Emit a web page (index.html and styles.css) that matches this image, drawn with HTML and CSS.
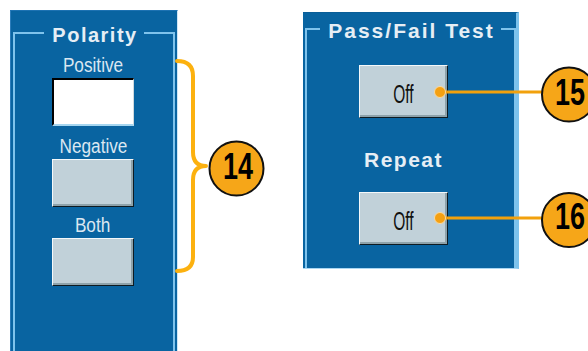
FILE: index.html
```html
<!DOCTYPE html>
<html lang="en">
<head>
    <meta charset="UTF-8">
    <meta name="viewport" content="width=device-width, initial-scale=1.0">
    <title>Polarity and Pass/Fail Test</title>
    <link rel="stylesheet" href="styles.css">
</head>
<body>
    <div class="panel panel-polarity">
        <div class="legend"><span>Polarity</span></div>
        <div class="frame">
            <div class="label"><span>Positive</span></div>
            <div class="btn btn-on"></div>
            <div class="label"><span>Negative</span></div>
            <div class="btn"></div>
            <div class="label label-both"><span>Both</span></div>
            <div class="btn"></div>
        </div>
    </div>

    <div class="panel panel-test">
        <div class="legend legend-test"><span>Pass/Fail Test</span></div>
        <div class="frame frame-test">
            <div class="btn btn-off"><span>Off</span></div>
            <div class="repeat">Repeat</div>
            <div class="btn btn-off btn-repeat"><span>Off</span></div>
        </div>
    </div>

    <!-- callouts drawn over the panels -->
    <svg class="callouts" width="588" height="351" viewBox="0 0 588 351">
        <path class="brace" d="M177,61 Q193,61 193,76 L193,152 Q193,166 206,166 Q193,166 193,180 L193,257 Q193,271 177,271"/>
        <line class="leader" x1="440" y1="92" x2="543" y2="92"/>
        <line class="leader" x1="440" y1="218" x2="543" y2="218"/>
        <circle class="dot" cx="440" cy="92" r="5.5"/>
        <circle class="dot" cx="440" cy="218" r="5.5"/>

        <circle class="badge" cx="236.5" cy="168.5" r="27"/>
        <text class="num" x="238" y="179" textLength="30" lengthAdjust="spacingAndGlyphs">14</text>

        <circle class="badge" cx="569" cy="94.5" r="27"/>
        <text class="num" x="570" y="105" textLength="30" lengthAdjust="spacingAndGlyphs">15</text>

        <circle class="badge" cx="569" cy="220" r="27"/>
        <text class="num" x="570" y="229" textLength="30" lengthAdjust="spacingAndGlyphs">16</text>
    </svg>
</body>
</html>
```

FILE: styles.css
```css
* {
    box-sizing: border-box;
}
body {
    margin: 0;
    width: 588px;
    height: 351px;
    overflow: hidden;
    position: relative;
    display: flex;
    align-items: flex-start;
    background-color: #ffffff;
    font-family: "Liberation Sans", Arial, sans-serif;
}
.panel {
    background-color: #0964a1;
    display: flex;
    flex-direction: column;
}
.panel-polarity {
    margin: 10px 0 0 10px;
    width: 168px;
    height: 341px;
    padding: 0 2px;
    border-left: 1px solid #2c7dbb;
    border-right: 1px solid #cfe6f6;
    border-top: 1px solid #1d72b2;
}
.panel-test {
    margin: 12px 0 0 125px;
    width: 216px;
    height: 257px;
    padding-left: 2px;
    border-right: 3px solid #7cc2ec;
    border-bottom: 1px solid #a9d6f2;
    border-top: 1px solid #0a5e98;
}

/* title row with the frame lines on each side */
.legend {
    display: flex;
    align-items: flex-end;
    margin-top: 14px;
    height: 20px;
    line-height: 20px;
    font-size: 20px;
    font-weight: bold;
    letter-spacing: 1.5px;
    color: #e6eef5;
}
.legend span {
    padding: 0 6px 0 8px;
}
.legend::before,
.legend::after {
    content: "";
    flex: 1;
    height: 11px;
    border-top: 2px solid #7fc3ec;
}
.legend::before {
    border-left: 2px solid #7fc3ec;
}
.legend::after {
    border-right: 2px solid #7fc3ec;
}
.legend-test {
    margin-top: 7px;
    height: 22px;
    line-height: 22px;
    font-size: 21px;
    letter-spacing: 2px;
}
.legend-test::before,
.legend-test::after {
    height: 12px;
}

.frame {
    flex: 1;
    display: flex;
    flex-direction: column;
    align-items: center;
    border-left: 2px solid #7fc3ec;
    border-right: 2px solid #7fc3ec;
}
.label {
    margin-top: 10px;
    height: 20px;
    line-height: 20px;
    font-size: 20px;
    color: #dbe7f1;
    text-align: center;
    padding-right: 2px;
}
.label span {
    display: inline-block;
    transform: scaleX(0.86);
}
.label-both {
    margin-top: 8px;
}

.btn {
    margin-top: 3px;
    width: 82px;
    height: 48px;
    background-color: #c1d1d9;
    border: 1px solid;
    border-color: #f4f8fa #0e1b22 #0e1b22 #f4f8fa;
    box-shadow: inset -2px -2px 0 #8ea2aa;
    margin-right: 2px;
}
.btn-on {
    background-color: #ffffff;
    border-width: 2px 1px 2px 2px;
    border-color: #000000 #cfd9de #a6d6f0 #000000;
    box-shadow: none;
}

.frame-test {
    align-items: flex-start;
    padding-left: 52px;
}
.btn-off {
    margin-top: 23px;
    width: 89px;
    height: 53px;
    display: flex;
    align-items: center;
    justify-content: center;
    padding-top: 5px;
    font-size: 25px;
    color: #111111;
}
.btn-off span {
    display: inline-block;
    transform: scaleX(0.62);
}
.btn-repeat {
    margin-top: 22px;
}
.repeat {
    margin-top: 31px;
    width: 89px;
    height: 21px;
    line-height: 21px;
    font-size: 21px;
    font-weight: bold;
    letter-spacing: 1.5px;
    text-align: center;
    color: #e6eef5;
}

.callouts {
    position: absolute;
    top: 0;
    left: 0;
    pointer-events: none;
}
.brace {
    fill: none;
    stroke: #fcb10f;
    stroke-width: 4;
    stroke-linecap: round;
    stroke-linejoin: round;
}
.leader {
    stroke: #f2a10c;
    stroke-width: 3;
}
.dot {
    fill: #f4a012;
    stroke: #fbd9a0;
    stroke-width: 1;
}
.badge {
    fill: #f6a618;
    stroke: #111111;
    stroke-width: 2;
}
.num {
    font-family: "Liberation Sans", Arial, sans-serif;
    font-weight: bold;
    font-size: 36px;
    fill: #000000;
    text-anchor: middle;
}
```
